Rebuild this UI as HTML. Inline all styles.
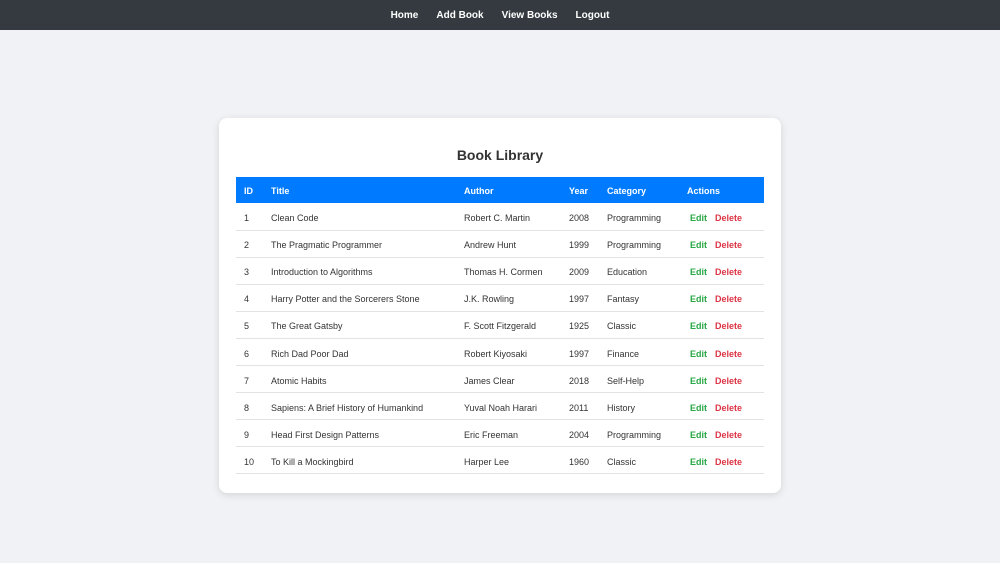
<!DOCTYPE html>
<html><head><style>
*{margin:0;padding:0;box-sizing:border-box}
body{width:1000px;height:563px;background:#f0f2f5;font-family:"Liberation Sans",sans-serif;color:#333;overflow:hidden;position:relative}
nav{height:30px;background:#343a40;text-align:center;font-size:10px;font-weight:bold;color:#fff;line-height:32px}
nav span{margin:0 9px}
.card{position:absolute;left:219px;top:118px;width:562px;height:375px;background:#fff;border-radius:8px;box-shadow:0 2px 8px rgba(0,0,0,.12)}
h1{position:absolute;top:29px;left:0;width:100%;text-align:center;font-size:14px;font-weight:bold;color:#333}
table{position:absolute;left:17px;top:59px;width:528px;border-collapse:collapse;font-size:9px}
th{background:#007bff;color:#fff;text-align:left;height:26px;font-weight:bold;padding:2px 0 0}
td{height:27.1px;border-bottom:1px solid #e3e3e3;padding:3px 0 0}
td:first-child,th:first-child{padding-left:8px}
.e{color:#28a745;font-weight:bold;margin-left:3px;margin-right:8px}
.d{color:#dc3545;font-weight:bold}
</style></head><body>
<nav><span>Home</span><span>Add Book</span><span>View Books</span><span>Logout</span></nav>
<div class="card"><h1>Book Library</h1>
<table>
<colgroup><col style="width:35px"><col style="width:193px"><col style="width:105px"><col style="width:38px"><col style="width:80px"><col></colgroup>
<tr><th>ID</th><th>Title</th><th>Author</th><th>Year</th><th>Category</th><th>Actions</th></tr>
<tr><td>1</td><td>Clean Code</td><td>Robert C. Martin</td><td>2008</td><td>Programming</td><td><span class="e">Edit</span><span class="d">Delete</span></td></tr>
<tr><td>2</td><td>The Pragmatic Programmer</td><td>Andrew Hunt</td><td>1999</td><td>Programming</td><td><span class="e">Edit</span><span class="d">Delete</span></td></tr>
<tr><td>3</td><td>Introduction to Algorithms</td><td>Thomas H. Cormen</td><td>2009</td><td>Education</td><td><span class="e">Edit</span><span class="d">Delete</span></td></tr>
<tr><td>4</td><td>Harry Potter and the Sorcerers Stone</td><td>J.K. Rowling</td><td>1997</td><td>Fantasy</td><td><span class="e">Edit</span><span class="d">Delete</span></td></tr>
<tr><td>5</td><td>The Great Gatsby</td><td>F. Scott Fitzgerald</td><td>1925</td><td>Classic</td><td><span class="e">Edit</span><span class="d">Delete</span></td></tr>
<tr><td>6</td><td>Rich Dad Poor Dad</td><td>Robert Kiyosaki</td><td>1997</td><td>Finance</td><td><span class="e">Edit</span><span class="d">Delete</span></td></tr>
<tr><td>7</td><td>Atomic Habits</td><td>James Clear</td><td>2018</td><td>Self-Help</td><td><span class="e">Edit</span><span class="d">Delete</span></td></tr>
<tr><td>8</td><td>Sapiens: A Brief History of Humankind</td><td>Yuval Noah Harari</td><td>2011</td><td>History</td><td><span class="e">Edit</span><span class="d">Delete</span></td></tr>
<tr><td>9</td><td>Head First Design Patterns</td><td>Eric Freeman</td><td>2004</td><td>Programming</td><td><span class="e">Edit</span><span class="d">Delete</span></td></tr>
<tr><td>10</td><td>To Kill a Mockingbird</td><td>Harper Lee</td><td>1960</td><td>Classic</td><td><span class="e">Edit</span><span class="d">Delete</span></td></tr>
</table></div>
</body></html>
